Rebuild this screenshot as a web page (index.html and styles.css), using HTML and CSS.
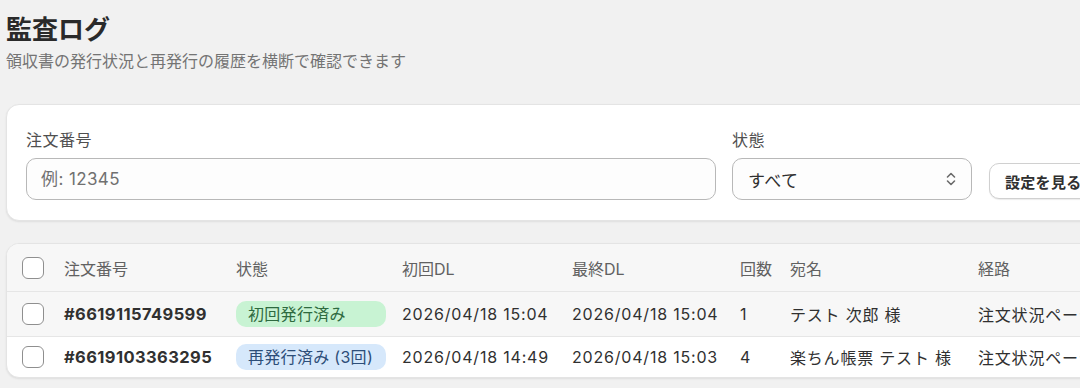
FILE: index.html
```html
<!DOCTYPE html>
<html lang="ja">
<head>
  <meta charset="UTF-8">
  <meta name="viewport" content="width=device-width, initial-scale=1.0">
  <title>監査ログ</title>
  <link rel="stylesheet" href="styles.css">
</head>
<body>
  <div class="page">
    <div class="header">
      <h1>監査ログ</h1>
      <p class="subtitle">領収書の発行状況と再発行の履歴を横断で確認できます</p>
    </div>

    <div class="card filters">
      <div class="field order-field">
        <label for="order">注文番号</label>
        <input id="order" class="input" placeholder="例: 12345">
      </div>
      <div class="field status-field">
        <label for="status">状態</label>
        <div class="select">
          <span>すべて</span>
          <svg class="chevron" width="10" height="14" viewBox="0 0 10 14">
            <path d="M1.5 5 L5 1.5 L8.5 5" fill="none" stroke="#6b6b6b" stroke-width="1.6" stroke-linecap="round" stroke-linejoin="round"/>
            <path d="M1.5 9 L5 12.5 L8.5 9" fill="none" stroke="#6b6b6b" stroke-width="1.6" stroke-linecap="round" stroke-linejoin="round"/>
          </svg>
        </div>
      </div>
      <button type="button" class="btn">設定を見る</button>
    </div>

    <div class="card table">
      <div class="row head">
        <div class="cell"><span class="check"></span></div>
        <div class="cell">注文番号</div>
        <div class="cell">状態</div>
        <div class="cell">初回DL</div>
        <div class="cell">最終DL</div>
        <div class="cell">回数</div>
        <div class="cell">宛名</div>
        <div class="cell">経路</div>
      </div>
      <div class="row hover">
        <div class="cell"><span class="check"></span></div>
        <div class="cell order">#6619115749599</div>
        <div class="cell"><span class="badge green">初回発行済み</span></div>
        <div class="cell">2026/04/18 15:04</div>
        <div class="cell">2026/04/18 15:04</div>
        <div class="cell">1</div>
        <div class="cell">テスト 次郎 様</div>
        <div class="cell">注文状況ページ</div>
      </div>
      <div class="row last">
        <div class="cell"><span class="check"></span></div>
        <div class="cell order">#6619103363295</div>
        <div class="cell"><span class="badge blue">再発行済み (3回)</span></div>
        <div class="cell">2026/04/18 14:49</div>
        <div class="cell">2026/04/18 15:03</div>
        <div class="cell">4</div>
        <div class="cell">楽ちん帳票 テスト 様</div>
        <div class="cell">注文状況ページ</div>
      </div>
    </div>
  </div>
</body>
</html>
```

FILE: styles.css
```css
* {
  margin: 0;
  padding: 0;
  box-sizing: border-box;
  font-family: Inter, "Noto Sans CJK JP", sans-serif;
}

body {
  background: #f1f1f1;
  color: #303030;
  overflow: hidden;
  width: 1080px;
  height: 388px;
}

.page {
  width: 1240px;
  padding: 11px 0 0 6px;
}

.header h1 {
  font-size: 26px;
  line-height: 38px;
  font-weight: 700;
  color: #2a2a2a;
}

.subtitle {
  font-size: 16px;
  line-height: 24px;
  color: #747474;
}

.card {
  background: #fff;
  border: 1px solid #e4e4e4;
  border-radius: 13px;
  box-shadow: 0 1px 2px rgba(0, 0, 0, 0.08);
}

/* filters */
.filters {
  margin-top: 31px;
  height: 117px;
  display: flex;
  align-items: flex-end;
  gap: 16px;
  padding: 0 19px 20px;
}

.field {
  display: flex;
  flex-direction: column;
  gap: 6px;
}

.field label {
  font-size: 16px;
  line-height: 24px;
  color: #4f4f4f;
  letter-spacing: 0.5px;
}

.order-field {
  width: 690px;
}

.status-field {
  width: 240px;
}

.input, .select {
  height: 42px;
  border: 1px solid #b8b8b8;
  border-radius: 10px;
  background: #fdfdfd;
  font-size: 17px;
  padding: 0 14px;
  color: #303030;
  letter-spacing: 0.4px;
}

.input::placeholder {
  color: #707070;
}

.input:focus {
  outline: none;
}

.select {
  display: flex;
  align-items: center;
  justify-content: space-between;
  padding: 0 15px 0 15px;
}

.btn {
  height: 36px;
  margin-left: 1px;
  margin-bottom: 1px;
  padding: 0 15px;
  border: 1px solid #d0d0d0;
  border-radius: 10px;
  background: #fff;
  box-shadow: 0 1px 1px rgba(0, 0, 0, 0.08);
  font-size: 15px;
  font-weight: 700;
  color: #303030;
  letter-spacing: 0.3px;
}

/* table */
.table {
  margin-top: 22px;
  overflow: hidden;
}

.row {
  display: grid;
  grid-template-columns: 42px 172px 166px 170px 168px 50px 188px 240px;
  align-items: center;
  padding-left: 15px;
  height: 45px;
  font-size: 16px;
  letter-spacing: 0.8px;
  border-top: 1px solid #e6e6e6;
}

.row.head {
  height: 47px;
  border-top: none;
  background: #f7f7f7;
  color: #616161;
  letter-spacing: 0;
}

.row.hover {
  background: #f7f7f7;
}

.row.last {
  height: 41px;
}

.cell {
  white-space: nowrap;
}

.order {
  font-weight: 700;
  font-size: 16.5px;
  letter-spacing: 0.4px;
}

.check {
  display: block;
  width: 22px;
  height: 22px;
  border: 1.5px solid #8f8f8f;
  border-radius: 6px;
  background: #fff;
}

.badge {
  display: block;
  width: 150px;
  height: 26px;
  line-height: 26px;
  padding: 0 12px;
  border-radius: 10px;
  font-size: 16px;
  letter-spacing: 0.3px;
}

.badge.green {
  background: #c8f3d3;
  color: #2e6a3f;
}

.badge.blue {
  background: #d6e8fb;
  color: #2d4e78;
}
```
